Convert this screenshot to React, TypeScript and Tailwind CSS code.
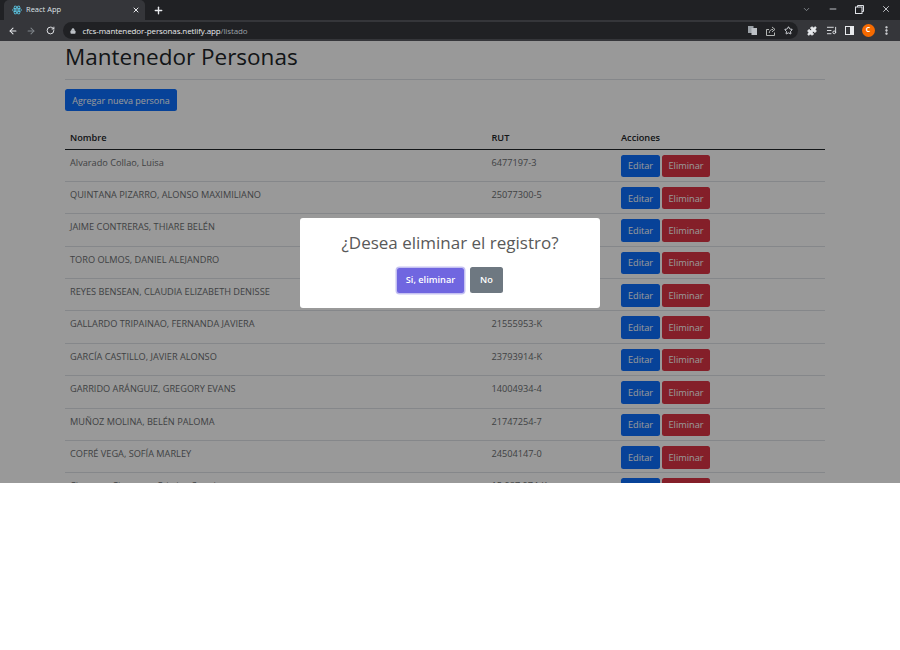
import React from "react";
import { ArrowLeft, ArrowRight, RotateCw, Lock, Star, Puzzle, ListMusic, MoreVertical, X, Plus, ChevronDown, Minus } from "lucide-react";

const rows = [
  ["Alvarado Collao, Luisa", "6477197-3"],
  ["QUINTANA PIZARRO, ALONSO MAXIMILIANO", "25077300-5"],
  ["JAIME CONTRERAS, THIARE BELÉN", ""],
  ["TORO OLMOS, DANIEL ALEJANDRO", ""],
  ["REYES BENSEAN, CLAUDIA ELIZABETH DENISSE", ""],
  ["GALLARDO TRIPAINAO, FERNANDA JAVIERA", "21555953-K"],
  ["GARCÍA CASTILLO, JAVIER ALONSO", "23793914-K"],
  ["GARRIDO ARÁNGUIZ, GREGORY EVANS", "14004934-4"],
  ["MUÑOZ MOLINA, BELÉN PALOMA", "21747254-7"],
  ["COFRÉ VEGA, SOFÍA MARLEY", "24504147-0"],
  ["Cisternas Cisternas, Cristina Sonnia", "15.987.974-K"],
];

function ReactIcon() {
  return (
    <svg width="10" height="10" viewBox="0 0 24 24" fill="none" stroke="#61dafb" strokeWidth="1.6">
      <circle cx="12" cy="12" r="2" fill="#61dafb" stroke="none" />
      <ellipse cx="12" cy="12" rx="11" ry="4.4" />
      <ellipse cx="12" cy="12" rx="11" ry="4.4" transform="rotate(60 12 12)" />
      <ellipse cx="12" cy="12" rx="11" ry="4.4" transform="rotate(120 12 12)" />
    </svg>
  );
}

function BrowserChrome() {
  return (
    <div className="h-[41px] bg-[#35363a] text-[#dee1e6] font-['Open_Sans',sans-serif]">
      <div className="h-[20px] bg-[#202124] flex items-start pl-[4px]">
        <div className="w-[141px] h-[20px] bg-[#35363a] rounded-t-[5px] flex items-center pl-[8px] pr-[5px]">
          <ReactIcon />
          <span className="ml-[4px] text-[7.5px] leading-none text-[#dee1e6] flex-1">React App</span>
          <X size={8} strokeWidth={3} color="#e8eaed" />
        </div>
        <div className="ml-[8px] h-[20px] flex items-center">
          <Plus size={11} strokeWidth={3} color="#e8eaed" />
        </div>
        <div className="flex-1" />
        <div className="h-[18px] flex items-center gap-[17px] pr-[9px]">
          <ChevronDown size={9} color="#9aa0a6" />
          <Minus size={10} color="#dee1e6" />
          <svg width="9" height="9" viewBox="0 0 9 9" fill="none" stroke="#dee1e6" strokeWidth="1">
            <rect x="0.5" y="2" width="6.5" height="6.5" />
            <path d="M2.5 2V.5h6v6H7" />
          </svg>
          <X size={10} color="#dee1e6" />
        </div>
      </div>
      <div className="h-[21px] flex items-center pl-[8px] pr-[7px]">
        <ArrowLeft size={10} strokeWidth={2.5} color="#e8eaed" />
        <ArrowRight size={10} strokeWidth={2.5} color="#80868b" className="ml-[8px]" />
        <RotateCw size={9} strokeWidth={2.5} color="#e8eaed" className="ml-[9.5px]" />
        <div className="ml-[8px] w-[735px] h-[17px] rounded-full bg-[#202124] flex items-center pl-[7px] pr-[5px]">
          <Lock size={6} fill="#bdc1c6" color="#bdc1c6" />
          <span className="ml-[7px] text-[8px] font-medium leading-none tracking-[-0.1px] text-[#e8eaed] flex-1 whitespace-nowrap">
            cfcs-mantenedor-personas.netlify.app<span className="text-[#9aa0a6] font-normal">/listado</span>
          </span>
          <svg width="9" height="9" viewBox="0 0 9 9" className="mr-[9px]">
            <rect width="5.5" height="7" fill="#9aa0a6" />
            <rect x="3.5" y="2" width="5.5" height="7" fill="#bdc1c6" />
          </svg>
          <svg width="10" height="10" viewBox="0 0 10 10" fill="none" stroke="#c4c7c5" strokeWidth="0.9" className="mr-[8px]">
            <path d="M3 3.5H.5v6h8V6.5" />
            <path d="M3.2 7C3.4 4.6 5 3.4 7 3.4M6 1l3 2.4L6 5.8" />
          </svg>
          <Star size={9} strokeWidth={2.5} color="#dee1e6" />
        </div>
        <Puzzle size={10} fill="#e8eaed" color="#e8eaed" className="ml-[9px]" />
        <ListMusic size={11} color="#e8eaed" className="ml-[9px]" />
        <svg width="9" height="9" viewBox="0 0 9 9" className="ml-[8px]">
          <rect x="0.5" y="0.5" width="8" height="8" fill="none" stroke="#e8eaed" />
          <rect x="5" y="0.5" width="3.5" height="8" fill="#e8eaed" />
        </svg>
        <div className="ml-[8px] w-[13px] h-[13px] rounded-full bg-[#f56a00] text-white text-[7px] font-bold flex items-center justify-center">C</div>
        <MoreVertical size={11} strokeWidth={3} color="#e8eaed" className="ml-[6px]" />
      </div>
    </div>
  );
}

export default function App() {
  return (
    <div className="w-[900px] h-[650px] bg-white overflow-hidden">
      <BrowserChrome />
      <div className="relative h-[442px] overflow-hidden bg-white font-['Open_Sans',sans-serif] text-[#212529]">
        <div className="w-[760px] ml-[65px]">
          <h1 className="text-[22.5px] leading-[32px] h-[39px] border-b border-[#dee2e6] mb-[9px]">Mantenedor Personas</h1>
          <button className="block h-[22px] w-[112px] rounded-[2.5px] bg-[#0d6efd] text-white text-[9px] leading-none">Agregar nueva persona</button>
          <table className="mt-[16px] w-[760px] table-fixed border-collapse text-[9.2px]">
            <thead>
              <tr className="h-[22px] border-b border-[#212529]">
                <th className="w-[426.5px] pl-[5px] text-left font-semibold">Nombre</th>
                <th className="w-[129.5px] text-left font-semibold">RUT</th>
                <th className="text-left font-semibold">Acciones</th>
              </tr>
            </thead>
            <tbody className="text-[#6b6e71]">
              {rows.map((r) => (
                <tr key={r[0]} className="h-[32.4px] border-b border-[#dee2e6] align-top">
                  <td className="pl-[5px] pt-[7px] leading-[12px] whitespace-nowrap">{r[0]}</td>
                  <td className="pt-[7px] leading-[12px]">{r[1]}</td>
                  <td className="pt-[5px]">
                    <div className="flex gap-[2px]">
                      <button className="w-[39px] h-[22.5px] rounded-[2.5px] bg-[#0d6efd] text-white text-[9.2px] leading-none">Editar</button>
                      <button className="w-[48px] h-[22.5px] rounded-[2.5px] bg-[#dc3545] text-white text-[9.2px] leading-none">Eliminar</button>
                    </div>
                  </td>
                </tr>
              ))}
            </tbody>
          </table>
        </div>
        <div className="absolute inset-0 bg-black/40" />
        <div className="absolute left-[300px] top-[177px] w-[300px] h-[90px] bg-white rounded-[3px] flex flex-col items-center">
          <div className="mt-[14px] text-[17px] leading-[22px] text-[#595959]">¿Desea eliminar el registro?</div>
          <div className="mt-[13px] flex items-center gap-[6px]">
            <button className="w-[67px] h-[25px] rounded-[2.5px] bg-[#7066e0] text-white text-[9.2px] font-semibold leading-none ring-[1.5px] ring-[#c5c1f2]">Si, eliminar</button>
            <button className="w-[33px] h-[26px] rounded-[2.5px] bg-[#6e7881] text-white text-[9.2px] font-semibold leading-none">No</button>
          </div>
        </div>
      </div>
    </div>
  );
}
